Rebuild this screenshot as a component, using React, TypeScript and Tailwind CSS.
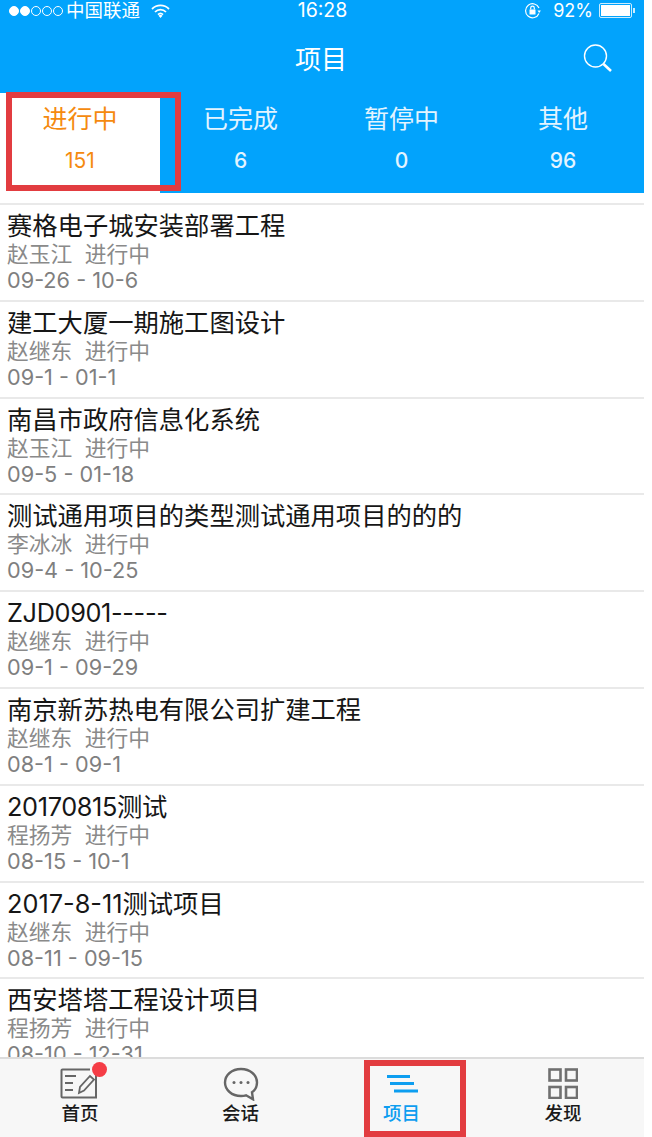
const font = '"Inter","Noto Sans CJK SC",sans-serif';

const tabs = [
  { label: "进行中", count: "151", active: true },
  { label: "已完成", count: "6" },
  { label: "暂停中", count: "0" },
  { label: "其他", count: "96" },
];

const rows = [
  { title: "赛格电子城安装部署工程", who: "赵玉江", date: "09-26 - 10-6" },
  { title: "建工大厦一期施工图设计", who: "赵继东", date: "09-1 - 01-1" },
  { title: "南昌市政府信息化系统", who: "赵玉江", date: "09-5 - 01-18" },
  { title: "测试通用项目的类型测试通用项目的的的", who: "李冰冰", date: "09-4 - 10-25" },
  { title: "ZJD0901-----", who: "赵继东", date: "09-1 - 09-29", tight: true },
  { title: "南京新苏热电有限公司扩建工程", who: "赵继东", date: "08-1 - 09-1" },
  { title: "20170815测试", who: "程扬芳", date: "08-15 - 10-1", tight: true },
  { title: "2017-8-11测试项目", who: "赵继东", date: "08-11 - 09-15" },
  { title: "西安塔塔工程设计项目", who: "程扬芳", date: "08-10 - 12-31" },
];

function Row({ title, who, date, tight }: { title: string; who: string; date: string; tight?: boolean }) {
  return (
    <div className="h-[96.8px] shrink-0 border-t-2 border-[#e9e9e9] pl-[7px] pt-[6px]">
      <div className={`text-[25.3px] leading-[30px] text-[#161616] ${tight ? "tracking-[-0.35px]" : ""}`}>{title}</div>
      <div className="text-[21.8px] leading-[26px] text-[#8a8a8a] whitespace-pre">{who}  进行中</div>
      <div className="text-[21.7px] leading-[26px] text-[#7f7f7f]">{date}</div>
    </div>
  );
}

function Item({ label, blue, icon }: { label: string; blue?: boolean; icon: React.ReactNode }) {
  return (
    <div className="flex flex-col items-center pt-[8px]">
      <div className="h-[33px] flex items-center justify-center">{icon}</div>
      <div className={`text-[18.5px] leading-[24px] mt-[1px] font-medium ${blue ? "text-[#0d9ef0]" : "text-[#1a1a1a]"}`}>{label}</div>
    </div>
  );
}

export default function App() {
  return (
    <div className="relative w-[652px] h-[1137px] bg-white overflow-hidden" style={{ fontFamily: font }}>
      <div className="w-[644px] h-full flex flex-col">
        <div className="bg-[#02a3fc] text-white shrink-0">
          <div className="h-[21px] flex items-center justify-between pl-[9px] pr-[9px] leading-none">
            <div className="flex items-center flex-1">
              <span className="flex gap-[1px] mr-[3px]">
                {[1, 1, 0, 0, 0].map((f, i) => (
                  <span key={i} className={`w-[10px] h-[10px] rounded-full border border-white ${f ? "bg-white" : ""}`} />
                ))}
              </span>
              <span className="text-[18.5px] leading-none">中国联通</span>
              <svg className="ml-[11px]" width="19" height="14" viewBox="0 0 19 14" fill="none" stroke="white" strokeWidth="1.8">
                <path d="M1 5a12 12 0 0 1 17 0M4 8a7.6 7.6 0 0 1 11 0M7 10.6a3.6 3.6 0 0 1 5 0" />
                <path d="M9.5 14l-2-2.2a2.8 2.8 0 0 1 4 0z" fill="white" stroke="none" />
              </svg>
            </div>
            <span className="text-[19.5px] leading-none ml-[1px]">16:28</span>
            <div className="flex items-center justify-end flex-1">
              <svg width="18" height="18" viewBox="0 0 18 18" fill="none" stroke="white" strokeWidth="1.2">
                <path d="M15 11.5A7 7 0 1 1 15 6" />
                <path d="M13.5 8.5h3.4l-1.7 2.4z" fill="white" stroke="none" />
                <rect x="5.5" y="7.5" width="6" height="5" fill="white" stroke="none" />
                <path d="M6.7 7.5V6a1.8 1.8 0 0 1 3.6 0v1.5" />
              </svg>
              <span className="ml-[11px] text-[18px] leading-none">92%</span>
              <span className="ml-[6px] w-[33px] h-[15px] border border-white/80 p-[1px] rounded-[2px]">
                <span className="block h-full w-[29px] bg-white" />
              </span>
              <span className="w-[2px] h-[5px] bg-white/80 ml-[1px]" />
            </div>
          </div>
          <div className="relative h-[72px] flex items-center justify-center">
            <span className="text-[26px] mt-[5px] mr-[2px]">项目</span>
            <svg className="absolute right-[31px] top-[22px]" width="30" height="30" viewBox="0 0 30 30" fill="none" stroke="white">
              <circle cx="12.5" cy="13" r="11" strokeWidth="1.4" />
              <path d="M20.5 21l7.5 7" strokeWidth="2.6" />
            </svg>
          </div>
          <div className="h-[100px] grid grid-cols-[160px_161px_161px_162px]">
            {tabs.map((t) => (
              <div
                key={t.label}
                className={`flex flex-col items-center pt-[9px] ${t.active ? "bg-white text-[#f58a0f]" : "text-[#e3f4ff]"}`}
              >
                <div className="text-[25px] leading-[34px]">{t.label}</div>
                <div className={`text-[21px] leading-[26px] mt-[12px] ${t.active ? "" : "font-medium"}`}>{t.count}</div>
              </div>
            ))}
          </div>
        </div>
        <div className="mt-[10px] flex-1 min-h-0 overflow-hidden flex flex-col">
          {rows.map((r) => (
            <Row key={r.title} title={r.title} who={r.who} date={r.date} tight={r.tight} />
          ))}
        </div>
        <div className="h-[80px] shrink-0 bg-[#f7f7f7] border-t-2 border-[#dcdcdc] grid grid-cols-[160px_161px_161px_162px]">
          <Item
            label="首页"
            icon={
              <span className="relative">
                <svg width="40" height="33" viewBox="0 0 40 33" fill="none" stroke="#666" strokeWidth="2" className="block">
                  <path d="M36 8v22.5H2.5a1 1 0 0 1-1-1V3.5a1 1 0 0 1 1-1H30" />
                  <path d="M5 9h11M5 16h8M5 23h8" />
                  <path d="M19 26l1-6 10-11 4 3.5-10 11z" strokeWidth="1.8" />
                </svg>
                <span className="absolute -top-[5px] -right-[7px] w-[15px] h-[15px] rounded-full bg-[#f53d46]" />
              </span>
            }
          />
          <Item
            label="会话"
            icon={
              <svg width="36" height="34" viewBox="0 0 36 34" fill="none" stroke="#666" strokeWidth="2.4">
                <path d="M18 2C8.7 2 2 8.2 2 15.5S8.7 29 18 29c1.7 0 3.5-.2 5-.7l7 4-1-7c3.6-2.5 5-6 5-9.8C34 8.2 27.3 2 18 2z" />
                <circle cx="11" cy="15.5" r="1.5" fill="#666" stroke="none" />
                <circle cx="18" cy="15.5" r="1.5" fill="#666" stroke="none" />
                <circle cx="25" cy="15.5" r="1.5" fill="#666" stroke="none" />
              </svg>
            }
          />
          <Item
            label="项目"
            blue
            icon={
              <svg width="32" height="20" viewBox="0 0 32 20" fill="none" stroke="#0d9ef0" strokeWidth="3">
                <path d="M1 2.5h23M4 9.5h24M8 17h24" />
              </svg>
            }
          />
          <Item
            label="发现"
            icon={
              <svg width="30" height="31" viewBox="0 0 30 31" fill="none" stroke="#707070" strokeWidth="2.6">
                <rect x="1.5" y="1.5" width="11" height="11" />
                <rect x="18" y="1.5" width="11" height="11" />
                <rect x="1.5" y="19" width="11" height="11" />
                <rect x="18" y="19" width="11" height="11" />
              </svg>
            }
          />
        </div>
      </div>
      <div className="absolute left-[6px] top-[92px] w-[175px] h-[99px] border-[6px] border-[#e23c40]" />
      <div className="absolute left-[364px] top-[1060px] w-[102px] h-[77px] border-[6px] border-[#e23c40]" />
    </div>
  );
}
